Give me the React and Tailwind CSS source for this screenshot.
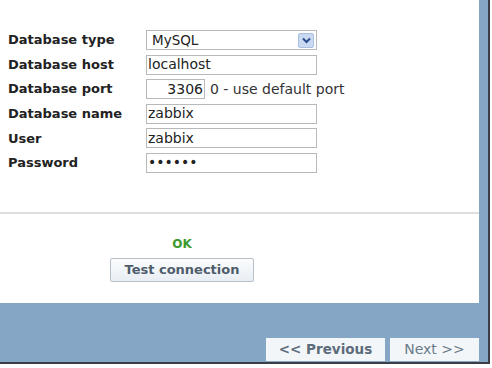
const font = { fontFamily: '"DejaVu Sans", Verdana, sans-serif' };

const fields = [
  { label: "Database type", type: "select", value: "MySQL" },
  { label: "Database host", value: "localhost" },
  { label: "Database port", type: "port", value: "3306" },
  { label: "Database name", value: "zabbix" },
  { label: "User", value: "zabbix" },
  { label: "Password", value: "••••••" },
];

function Field({ field }) {
  if (field.type === "select") {
    return (
      <div className="flex h-[20px] w-[171px] items-center justify-between border border-[#b9b9b9] bg-white pl-[5px] pr-[2px]">
        <span className="text-[13.5px] text-[#222]">{field.value}</span>
        <span className="flex h-[15px] w-[16px] items-center justify-center rounded-[2px] border border-[#aac0e0] bg-[#c9d9f2]">
          <svg width="9" height="7" viewBox="0 0 9 7">
            <path d="M1 1.5 L4.5 5 L8 1.5" fill="none" stroke="#2a4d8f" strokeWidth="2" />
          </svg>
        </span>
      </div>
    );
  }
  if (field.type === "port") {
    return (
      <div className="flex items-center gap-[5px]">
        <div className="flex h-[20px] w-[59px] items-center justify-end border border-[#b9b9b9] bg-white pr-[1px] text-[14px] text-[#222]">
          {field.value}
        </div>
        <span className="text-[14px] text-[#333]">0 - use default port</span>
      </div>
    );
  }
  return (
    <div className="flex h-[20px] w-[171px] items-center border border-[#b9b9b9] bg-white pl-[1px] text-[14px] text-[#222]">
      {field.value}
    </div>
  );
}

export default function App() {
  return (
    <div className="h-[368px] w-[492px] overflow-hidden bg-white" style={font}>
      <div className="h-[364px] w-[490px] border-b-[2px] border-r-[2px] border-[#3b3f45] bg-[#86a6c6]">
        <div className="flex h-[303px] w-[479px] flex-col bg-white">
          <div className="flex flex-col gap-[4.6px] pl-[8px] pt-[30px]">
            {fields.map((f) => (
              <div key={f.label} className="flex h-[20px] items-center">
                <span className="w-[138px] text-[13px] font-bold text-[#222]">{f.label}</span>
                <Field field={f} />
              </div>
            ))}
          </div>
          <div className="mt-[39px] h-[2px] w-full bg-[#dedede]" />
          <div className="ml-[110px] mt-[23px] flex w-[144px] flex-col items-center">
            <span className="text-[12px] font-bold leading-[14px] text-[#3c9b2c]">OK</span>
            <button className="mt-[7px] h-[24px] w-[144px] rounded-[2px] border border-[#b7bfc8] bg-gradient-to-b from-[#fbfcfd] to-[#e8eef4] text-[13px] font-bold text-[#4f5d6b]">
              Test connection
            </button>
          </div>
        </div>
        <div className="flex h-[59px] w-[479px] items-end justify-end gap-[5px] pb-[1px]">
          <button className="h-[23px] w-[119px] bg-[#f3f6f9] text-[13.5px] font-bold text-[#5d6c7b]">
            &lt;&lt; Previous
          </button>
          <button className="h-[23px] w-[89px] bg-[#f3f6f9] text-[14px] text-[#6a7a8a]">
            Next &gt;&gt;
          </button>
        </div>
      </div>
    </div>
  );
}
